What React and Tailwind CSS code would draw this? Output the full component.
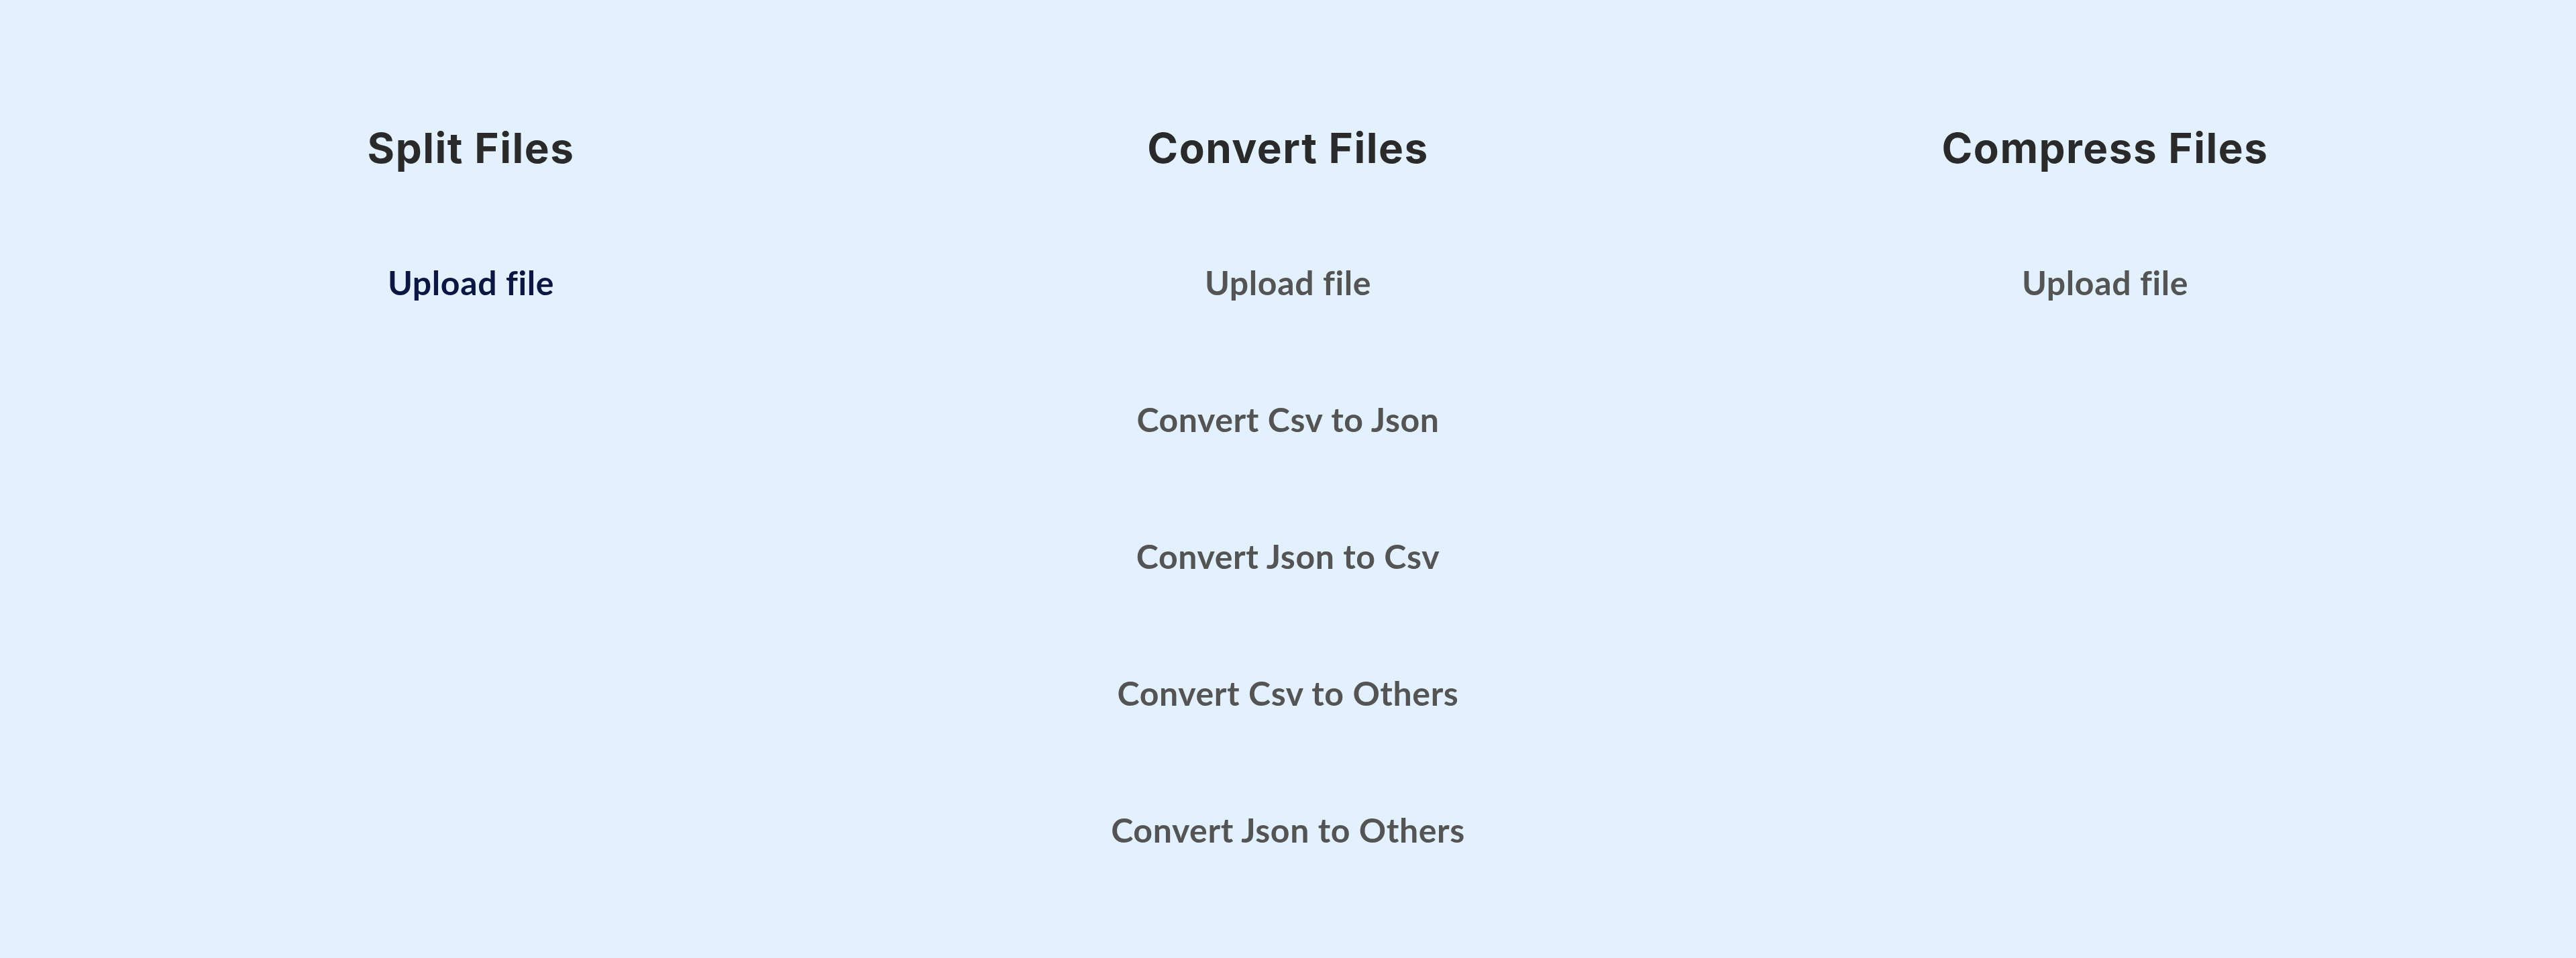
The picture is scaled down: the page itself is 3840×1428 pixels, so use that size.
const columns = [
  { title: "Split Files", items: ["Upload file"], active: 0 },
  {
    title: "Convert Files",
    items: [
      "Upload file",
      "Convert Csv to Json",
      "Convert Json to Csv",
      "Convert Csv to Others",
      "Convert Json to Others",
    ],
    active: -1,
  },
  { title: "Compress Files", items: ["Upload file"], active: -1 },
];

export default function App() {
  return (
    <div className="min-h-[1428px] w-full bg-[#e3f1fe] px-[93px]">
      <div className="grid grid-cols-3">
        {columns.map((col) => (
          <div key={col.title} className="flex flex-col items-center pt-[181px]">
            <h2 className="font-['Inter',sans-serif] text-[62px] font-bold leading-[80px] tracking-[1.5px] text-[#2a2a2a]">
              {col.title}
            </h2>
            <ul className="mt-[58px] flex flex-col items-center">
              {col.items.map((item, i) => (
                <li
                  key={item}
                  className={`font-['Lato',sans-serif] text-[50px] font-bold leading-[204px] tracking-[0.6px] ${
                    i === col.active ? "text-[#0b1642]" : "text-[#545454]"
                  }`}
                >
                  {item}
                </li>
              ))}
            </ul>
          </div>
        ))}
      </div>
    </div>
  );
}
